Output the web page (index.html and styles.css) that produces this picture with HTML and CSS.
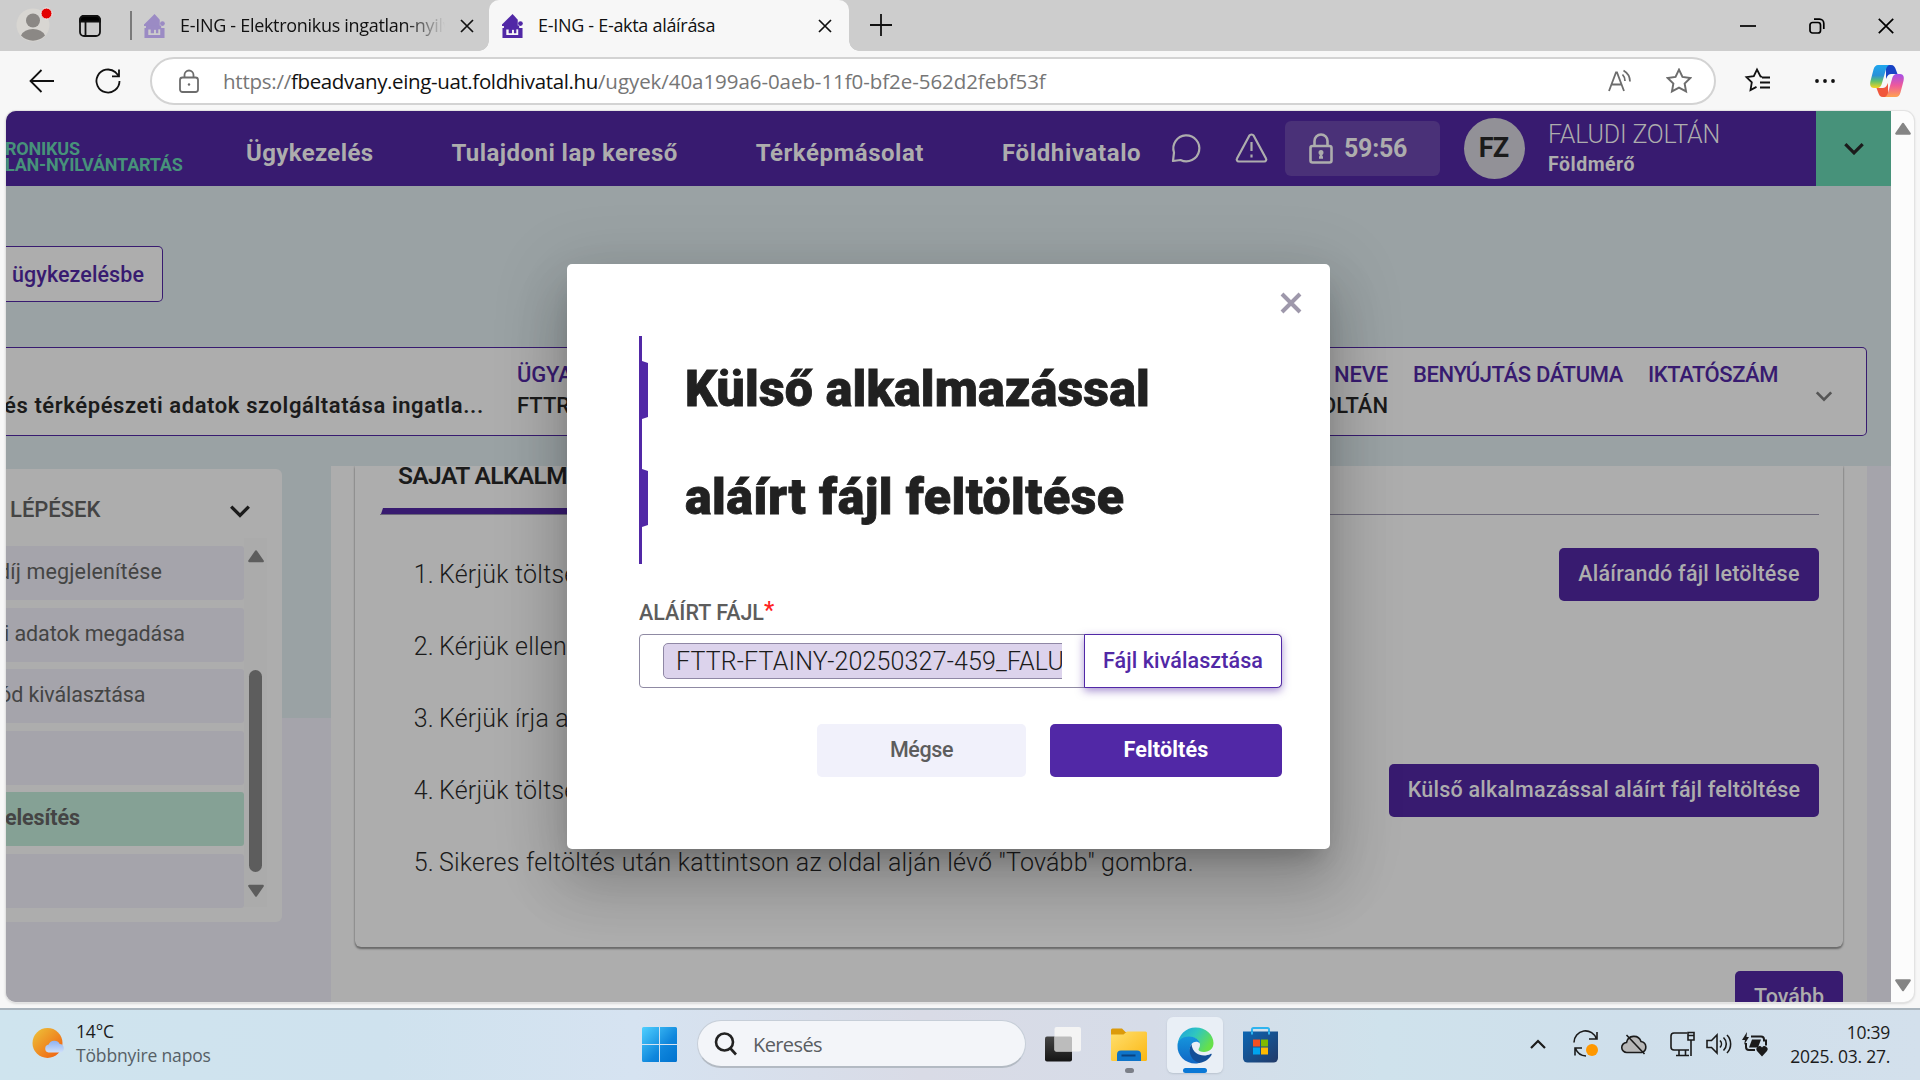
FILE: index.html
```html
<!DOCTYPE html>
<html lang="hu">
<head>
<meta charset="utf-8">
<title>E-ING - E-akta aláírása</title>
<link rel="stylesheet" href="styles.css">
</head>
<body>
<svg class="defs" width="0" height="0" aria-hidden="true">
  <symbol id="house" viewBox="0 0 22 25"><path d="M0 12.500V11L9 2l2-2 2 2 3.500 4v6.500z"/><circle cx="19.300" cy="10" r="2.500"/><path d="M2 12h16v4H2z"/><path fill-rule="evenodd" d="M.5 14.500H21.500V25H.5zM4.500 16v6h12.500V14.500h-2V20h-2.500v-3.500h-2V20H7v-4z"/></symbol>
  <symbol id="star" viewBox="0 0 24 24"><path d="M12 1.500l3.200 6.700 7.300 1-5.300 5.100 1.300 7.300L12 18.100l-6.500 3.500 1.300-7.300L1.500 9.200l7.300-1z"/></symbol>
  <symbol id="cross" viewBox="0 0 14 14"><path d="M1 1l12 12M13 1L1 13"/></symbol>
  <symbol id="chevron" viewBox="0 0 20 12"><path d="M2 2l8 8 8-8"/></symbol>
  <symbol id="tri" viewBox="0 0 16 12"><path d="M8 2l6 8.500H2z"/></symbol>
</svg>

<header class="tabstrip">
  <div class="profile">
    <svg width="36" height="36" viewBox="0 0 36 36"><circle cx="17" cy="19" r="16.500" fill="#d8d6d2"/><circle cx="17" cy="14.500" r="7" fill="#8b8885"/><path d="M5 29.500a12.500 9 0 0 1 24 0 16.500 16.500 0 0 1-24 0z" fill="#8b8885"/><circle cx="30.500" cy="7.500" r="5.500" fill="#e30000" stroke="#eee" stroke-width="1"/></svg>
  </div>
  <div class="workspaces">
    <svg width="22" height="22" viewBox="0 0 22 22" fill="none" stroke="#111" stroke-width="1.800"><rect x="1" y="1" width="20" height="20" rx="4"/><path d="M6.500 6v15"/><path d="M1 6.500V5a4 4 0 0 1 4-4h12a4 4 0 0 1 4 4v1.500z" fill="#000"/></svg>
  </div>
  <div class="tab">
    <svg class="fav pale" width="21" height="24"><use href="#house"/></svg>
    <span class="tab-title fade">E-ING - Elektronikus ingatlan-nyilvántartás</span>
    <svg class="x" width="14" height="14"><use href="#cross"/></svg>
  </div>
  <div class="tab active">
    <svg class="fav" width="21" height="24"><use href="#house"/></svg>
    <span class="tab-title">E-ING - E-akta aláírása</span>
    <svg class="x" width="14" height="14"><use href="#cross"/></svg>
  </div>
  <svg class="plus" width="22" height="22" viewBox="0 0 22 22"><path d="M11 0v22M0 11h22"/></svg>
  <div class="window-buttons">
    <svg width="16" height="16" viewBox="0 0 16 16"><path d="M0 8h16"/></svg>
    <svg width="16" height="16" viewBox="0 0 16 16"><rect x="1" y="4.500" width="10.500" height="10.500" rx="2.500"/><path d="M5 1.200h5.500a4.300 4.300 0 0 1 4.300 4.300V11"/></svg>
    <svg width="16" height="16" viewBox="0 0 16 16"><path d="M.8.800l14.400 14.400M15.200.800L.8 15.200"/></svg>
  </div>
</header>

<div class="toolbar">
  <svg class="back" width="26" height="24" viewBox="0 0 26 24"><path d="M1.500 12H25M12.500 1L1.500 12l11 11"/></svg>
  <svg class="reload" width="26" height="26" viewBox="0 0 26 26"><path d="M24.500 13a11.500 11.500 0 1 1-4-8.700L24 8M24 1.500V8.300h-7"/></svg>
  <div class="address">
    <svg class="padlock" width="20" height="24" viewBox="0 0 20 24"><rect x="1" y="8.500" width="18" height="14.500" rx="2.500"/><path d="M5.500 8.500V6a4.500 4.500 0 0 1 9 0v2.500"/><circle cx="10" cy="15.500" r="1.200" class="dot"/></svg>
    <span class="url"><span class="scheme">https://</span><span class="host">fbeadvany.eing-uat.foldhivatal.hu</span><span class="path">/ugyek/40a199a6-0aeb-11f0-bf2e-562d2febf53f</span></span>
    <svg class="aloud" width="24" height="24" viewBox="0 0 24 24"><path d="M1 22L8 3.500h1L16 22M3.500 15.500h10M14.500 5.500a9 9 0 0 1 2.500 6.500M15.500 1.500a13 13 0 0 1 6.500 11"/></svg>
    <svg class="star" width="26" height="26"><use href="#star"/></svg>
  </div>
  <svg class="favorites" width="26" height="26" viewBox="0 0 26 26"><path d="M17 8.800l-1.500-.3L12 1.500 8.800 8.200l-7.300 1 5.300 5.100-1.300 7.800 6-3.200M17 9.500h8M15 14.500h10M15 19.500h10"/></svg>
  <svg class="more" width="22" height="6" viewBox="0 0 22 6"><circle cx="3" cy="3" r="1.900"/><circle cx="11" cy="3" r="1.900"/><circle cx="19" cy="3" r="1.900"/></svg>
  <svg class="copilot" width="34" height="32" viewBox="0 0 34 32">
    <defs>
      <linearGradient id="cpa" x1="0" y1="0" x2="0" y2="1"><stop offset="0" stop-color="#1ea7ee"/><stop offset=".45" stop-color="#2a90d8"/><stop offset=".7" stop-color="#5fc06d"/><stop offset="1" stop-color="#f6d51f"/></linearGradient>
      <linearGradient id="cpb" x1="0" y1="0" x2="0" y2="1"><stop offset="0" stop-color="#a44ee8"/><stop offset=".5" stop-color="#ee5a9b"/><stop offset="1" stop-color="#ffa24f"/></linearGradient>
    </defs>
    <path d="M16 0h5c3 0 4 2 5 5l1.500 4H21c-3 0-4 3-5 5z" fill="#1843c5"/>
    <path d="M18 32h-5c-3 0-4-2-5-5l-1.500-4H13c3 0 4-3 5-5z" fill="#f0573c"/>
    <path d="M8 0h11c-2 1-2.700 3-3.500 6l-3.500 12c-1 3.500-2 5-5 5H4c-3.500 0-4.500-3-3.500-7L3.500 4.500C4.300 1.500 6 0 8 0z" fill="url(#cpa)"/>
    <path d="M26 32H15c2-1 2.700-3 3.500-6L22 14c1-3.500 2-5 5-5h3c3.500 0 4.500 3 3.500 7l-3 11.500c-.8 3-2.500 4.500-4.500 4.500z" fill="url(#cpb)"/>
  </svg>
</div>

<div class="viewport">
  <div class="page">
    <div class="site-header">
      <div class="brand"><span>RONIKUS</span><span>LAN-NYILVÁNTARTÁS</span></div>
      <nav class="nav"><a class="n1">Ügykezelés</a><a class="n2">Tulajdoni lap kereső</a><a class="n3">Térképmásolat</a><a class="n4">Földhivatalo</a></nav>
      <svg class="line-icon" width="30" height="30" viewBox="0 0 30 30"><path d="M3 19.500A13 13 0 1 1 9.500 27L2 28z"/></svg>
      <svg class="line-icon" width="33" height="30" viewBox="0 0 33 30"><path d="M14.300 2.700a2.600 2.600 0 0 1 4.400 0L31 25.500a2 2 0 0 1-1.700 3H3.700a2 2 0 0 1-1.700-3zM16.500 9v9M16.500 21.500v3"/></svg>
      <div class="timer"><svg width="24" height="31" viewBox="0 0 24 31"><rect x="1.500" y="13" width="21" height="16.500" rx="2"/><path d="M5.500 13V8a6.500 6.500 0 0 1 13 0v5M12 18.500v6M10 24.500h4"/><circle cx="12" cy="19.500" r="1.200"/></svg><span>59:56</span></div>
      <div class="avatar"><span>FZ</span></div>
      <div class="user"><span class="user-name">FALUDI ZOLTÁN</span><span class="role">Földmérő</span></div>
      <div class="expand"><svg width="22" height="13"><use href="#chevron"/></svg></div>
    </div>

    <div class="hero">
      <div class="back-link">ügykezelésbe</div>
      <div class="case">
        <div><span class="label">&nbsp;</span><span class="value long">és térképészeti adatok szolgáltatása ingatla...</span></div>
        <div><span class="label">ÜGYAZONOSÍTÓ</span><span class="value">FTTR-FTAINY</span></div>
        <div class="end"><span class="label">BENYÚJTÓ NEVE</span><span class="value">FALUDI ZOLTÁN</span></div>
        <div><span class="label l1">BENYÚJTÁS DÁTUMA</span></div>
        <div><span class="label l2">IKTATÓSZÁM</span></div>
        <svg width="18" height="12"><use href="#chevron"/></svg>
      </div>
    </div>

    <div class="workspace">
      <aside class="side">
        <div class="steps">
          <div class="steps-head"><span>LÉPÉSEK</span><svg width="22" height="14"><use href="#chevron"/></svg></div>
          <div class="steps-body">
            <ul class="step-list">
              <li><span class="cut-a">díj megjelenítése</span></li>
              <li><span class="cut-b">i adatok megadása</span></li>
              <li><span class="cut-c">ód kiválasztása</span></li>
              <li></li>
              <li class="current"><span class="cut-d">elesítés</span></li>
              <li></li>
            </ul>
            <div class="mini-scroll"><svg width="18" height="14"><use href="#tri"/></svg><i></i><svg class="down" width="18" height="14"><use href="#tri"/></svg></div>
          </div>
        </div>
      </aside>
      <main class="main">
        <section class="card">
          <div class="card-tabs"><div class="card-tab">SAJÁT ALKALMAZÁS</div></div>
          <ol class="guide">
            <li><b>1.</b><span>Kérjük töltse le a fájlt.</span><a class="btn t1">Aláírandó fájl letöltése</a></li>
            <li><b>2.</b><span>Kérjük ellenőrizze a fájlt.</span></li>
            <li><b>3.</b><span>Kérjük írja alá a fájlt.</span></li>
            <li><b>4.</b><span>Kérjük töltse fel a fájlt.</span><a class="btn t2">Külső alkalmazással aláírt fájl feltöltése</a></li>
            <li><b>5.</b><span>Sikeres feltöltés után kattintson az oldal alján lévő "Tovább" gombra.</span></li>
          </ol>
        </section>
        <div class="main-foot"><a class="btn next">Tovább</a></div>
      </main>
    </div>

    <div class="modal">
      <div class="close-row"><svg width="22" height="20" viewBox="0 0 22 20"><path d="M2 1l18 18M20 1L2 19"/></svg></div>
      <div class="modal-body">
        <div class="modal-title">
          <div class="title-line"><i></i><span class="tl1">Külső alkalmazással</span></div>
          <div class="title-line"><i></i><span class="tl2">aláírt fájl feltöltése</span></div>
        </div>
        <div class="field-label">ALÁÍRT FÁJL<em>*</em></div>
        <div class="file-input">
          <div class="chip-clip"><div class="chip">FTTR-FTAINY-20250327-459_FALUDI</div></div>
          <a class="pick">Fájl kiválasztása</a>
        </div>
        <div class="actions"><a class="cancel">Mégse</a><a class="submit">Feltöltés</a></div>
      </div>
    </div>
  </div>
  <div class="scrollbar"><svg width="18" height="15"><use href="#tri"/></svg><svg class="down" width="18" height="15"><use href="#tri"/></svg></div>
</div>

<footer class="taskbar">
  <div class="weather">
    <svg width="34" height="34" viewBox="0 0 34 34"><defs><linearGradient id="sun" x1="0" y1="0" x2="1" y2="1"><stop offset="0" stop-color="#edc53a"/><stop offset="1" stop-color="#f0590d"/></linearGradient><linearGradient id="cl" x1="0" y1="0" x2="0" y2="1"><stop offset="0" stop-color="#8fb2f2"/><stop offset="1" stop-color="#cfe0fa"/></linearGradient></defs><circle cx="15.500" cy="16" r="15" fill="url(#sun)"/><path d="M16.500 25.500a4 4 0 0 1 .2-7.900 6 6 0 0 1 11-.6 4.400 4.400 0 0 1 1.300 8.500z" fill="url(#cl)"/></svg>
    <div><span class="temp">14°C</span><span class="sky">Többnyire napos</span></div>
  </div>
  <div class="apps">
    <svg class="start" width="35" height="35" viewBox="0 0 35 35"><defs><linearGradient id="win" x1="0" y1="0" x2="1" y2="1"><stop offset="0" stop-color="#4fd0ff"/><stop offset=".6" stop-color="#0f86dc"/><stop offset="1" stop-color="#0072cf"/></linearGradient></defs><path d="M1.500 0H17v17H0V1.500A1.500 1.500 0 0 1 1.500 0zM18 0h15.500A1.500 1.500 0 0 1 35 1.500V17H18zM0 18h17v17H1.500A1.500 1.500 0 0 1 0 33.500zM18 18h17v15.500a1.500 1.500 0 0 1-1.500 1.500H18z" fill="url(#win)"/></svg>
    <div class="search"><svg width="24" height="24" viewBox="0 0 24 24"><circle cx="10.500" cy="10" r="8.500"/><path d="M16.500 16.500l5.500 6"/></svg><span>Keresés</span></div>
    <svg class="taskview" width="36" height="35" viewBox="0 0 36 35"><defs><linearGradient id="dk" x1="0" y1="0" x2="0" y2="1"><stop offset="0" stop-color="#454545"/><stop offset="1" stop-color="#151515"/></linearGradient></defs><rect y="9.500" width="27" height="25" rx="2" fill="url(#dk)"/><rect x="9.500" y="0" width="26.500" height="24.500" rx="2" fill="#f4f4f4"/><path d="M9.500 9.500h16a1.500 1.500 0 0 1 1.500 1.500v13.500H11a1.500 1.500 0 0 1-1.500-1.500z" fill="#bcbcbc"/></svg>
    <div class="app folder"><svg width="36" height="34" viewBox="0 0 36 34"><defs><linearGradient id="fo" x1="0" y1="0" x2="1" y2="1"><stop offset="0" stop-color="#ffdf6e"/><stop offset="1" stop-color="#fbb713"/></linearGradient></defs><path d="M0 2a1.500 1.500 0 0 1 1.500-1.500H11l3.500 3.500H20v5H0z" fill="#dc9a0b"/><path d="M0 6.500h12.500L16 3.500h18.500A1.500 1.500 0 0 1 36 5v26.500a1.500 1.500 0 0 1-1.500 1.500h-33A1.500 1.500 0 0 1 0 31.500z" fill="url(#fo)"/><path d="M6 33v-6.500a4 4 0 0 1 4-4h16a4 4 0 0 1 4 4V33z" fill="#0f74c9"/><path d="M10.500 27.500h14" stroke="#0a4280" stroke-width="2"/></svg><i></i></div>
    <div class="app edge"><svg width="37" height="37" viewBox="0 0 37 37"><defs><linearGradient id="eg" x1="0" y1="0" x2="1" y2=".5"><stop offset="0" stop-color="#1c9de0"/><stop offset=".5" stop-color="#2fc6c0"/><stop offset="1" stop-color="#66e04a"/></linearGradient><linearGradient id="eb" x1="0" y1="0" x2="0" y2="1"><stop offset="0" stop-color="#1695dc"/><stop offset="1" stop-color="#0f66c4"/></linearGradient></defs><path d="M.5 18.500C1 8 9 .5 18.500.5 29 .5 36.500 8 36.500 16c0 5.500-4 9-9.500 9-3.500 0-5.500-1.200-5.500-2.500 0-1.200 1.500-2 1.500-5 0-4-5-7.500-11-7.500C7 10 2 13 .5 18.500z" fill="url(#eg)"/><path d="M.5 18.500C1 12.500 6 9.500 12 9.500c6 0 10.500 3.500 11 7-2-2.300-6-2.500-8.500.5-4 5-.5 14 7 17 3 1.200 1 2.500-3 2.500C8 36.500 0 28.500.5 18.500z" fill="url(#eb)"/><path d="M14.500 17c-3.500 4.500-2.500 16 8 19 6-1 10-4.500 12-8 .5-.9-.2-1.400-1-1-7 3.500-18 1-19-10z" fill="#134f98"/></svg><i></i></div>
    <svg class="store" width="35" height="36" viewBox="0 0 35 36"><defs><linearGradient id="st" x1="0" y1="0" x2="1" y2="1"><stop offset="0" stop-color="#0c66b3"/><stop offset="1" stop-color="#223a68"/></linearGradient></defs><path d="M9 7V2.500A1.500 1.500 0 0 1 10.500 1h14A1.500 1.500 0 0 1 26 2.500V7" fill="none" stroke="#2fb4ef" stroke-width="2"/><path d="M0 4.500h35V31a4.500 4.500 0 0 1-4.500 4.500h-26A4.500 4.500 0 0 1 0 31z" fill="url(#st)"/><path d="M9 4.500v3M26 4.500v3" stroke="#2fb4ef" stroke-width="2"/><path d="M10 12.500h7v7h-7z" fill="#f25022"/><path d="M18 12.500h7v7h-7z" fill="#7fba00"/><path d="M10 20.500h7v7h-7z" fill="#00a4ef"/><path d="M18 20.500h7v7h-7z" fill="#ffb900"/></svg>
  </div>
  <div class="tray">
    <svg class="up" width="16" height="9" viewBox="0 0 16 9"><path d="M1 8l7-7 7 7"/></svg>
    <svg class="sync" width="26" height="26" viewBox="0 0 26 26"><path d="M1 11.500A11.500 11.500 0 0 1 23.500 8M24 1v7h-8M9 17H2v7.500M2.500 17.500A12 12 0 0 0 13 25"/><circle cx="19" cy="19" r="6" class="orange"/></svg>
    <svg class="cloud" width="26" height="22" viewBox="0 0 26 22"><path d="M6 19.500a5 5 0 0 1-.5-10 7.500 7.500 0 0 1 14.500-1 5.600 5.600 0 0 1 .5 11z" fill="#b8b8b8"/><path d="M5.500 2l18 19"/></svg>
    <svg class="monitor" width="25" height="26" viewBox="0 0 25 26"><path d="M17 2H4a3 3 0 0 0-3 3v11a3 3 0 0 0 3 3h15M9 19v5M15.500 19v5M6 24.500h13M18 1.500h6V9h-6zM21 9v16M18 4.500h6"/></svg>
    <svg class="sound" width="25" height="24" viewBox="0 0 25 24"><path d="M1 8.500h4.500L11 3v18l-5.500-5.500H1zM14 8.500a5 5 0 0 1 0 7M17.500 5.500a9 9 0 0 1 0 13M21 3a13 13 0 0 1 0 18"/></svg>
    <svg class="battery" width="26" height="26" viewBox="0 0 26 26"><path d="M9 5.500h10a3 3 0 0 1 3 3v1h2v5M4 12v4a3 3 0 0 0 3 3h6"/><path d="M10 8.500h9l-3 8H7z" class="fill"/><path d="M5 1L0 9h3l-1 5 5-8H4.500z" class="fill"/><path d="M20 25.500l-5-5.500a3 3 0 0 1 5-3.500 3 3 0 0 1 5 3.500z" class="fill"/></svg>
    <div class="clock"><span>10:39</span><span>2025. 03. 27.</span></div>
  </div>
</footer>
</body>
</html>
```
FILE: styles.css
```css
* { box-sizing: border-box; }
body {
  margin: 0; width: 1920px; height: 1080px; overflow: hidden;
  display: flex; flex-direction: column; background: #f7f7f7;
  font-family: Roboto, "Liberation Sans", sans-serif; color: #1b1b1b;
}
svg { display: block; flex: none; overflow: visible; }
.defs { position: absolute; }
ul, ol { list-style: none; margin: 0; padding: 0; }

/* tab strip */
.tabstrip { height: 51px; background: #cdcdcd; display: flex; align-items: center; font: 18px "Open Sans", sans-serif; color: #111; flex: none; }
.profile { width: 79px; padding: 0 0 3px 16px; }
.workspaces { width: 53px; height: 29px; display: flex; align-items: center; border-right: 2px solid #7a7a7a; }
.tab { display: flex; align-items: center; width: 357px; height: 51px; padding-left: 12px; }
.tab.active { width: 360px; background: #f7f7f7; border-radius: 10px 10px 0 0; padding-left: 13px; position: relative; }
.tab.active::before, .tab.active::after { content: ""; position: absolute; bottom: 0; width: 10px; height: 10px; }
.tab.active::before { left: -10px; background: radial-gradient(circle at 0 0, transparent 9.500px, #f7f7f7 10px); }
.tab.active::after { right: -10px; background: radial-gradient(circle at 100% 0, transparent 9.500px, #f7f7f7 10px); }
.fav { fill: #5128a6; }
.fav.pale { fill: #9b8bc4; }
.tab-title { width: 267px; margin: 0 12px 1px 15px; letter-spacing: -.3px; white-space: nowrap; overflow: hidden; }
.fade { width: 268px; }
.tab.active .tab-title { width: 268px; }
.fade { -webkit-mask-image: linear-gradient(90deg, #000 225px, transparent 265px); mask-image: linear-gradient(90deg, #000 225px, transparent 265px); }
.x { stroke: #111; stroke-width: 1.700; }
.plus { margin: 0 0 2px 21px; stroke: #111; stroke-width: 1.800; }
.window-buttons { margin-left: auto; padding-right: 26px; display: flex; gap: 53px; fill: none; stroke: #000; stroke-width: 1.700; }

/* toolbar */
.toolbar { height: 60px; display: flex; align-items: center; flex: none; fill: none; stroke: #111; stroke-width: 1.800; }
.back { margin-left: 29px; }
.reload { margin-left: 40px; }
.address { margin-left: 29px; width: 1566px; height: 48px; border: 2px solid #d3d3d3; border-radius: 24px; background: #fff; display: flex; align-items: center; padding: 0 22px 0 27px; stroke: #6d6d6d; }
.padlock .dot { fill: #6d6d6d; stroke: none; }
.url { margin-left: 24px; font: 20.500px "Open Sans", sans-serif; color: #767676; white-space: nowrap; }
.scheme { letter-spacing: -.24px; }
.host { color: #111; letter-spacing: -.37px; }
.path { letter-spacing: -.06px; }
.aloud { margin-left: auto; margin-right: 34px; }
.favorites { margin-left: 29px; }
.more { margin-left: 43px; fill: #111; stroke: none; }
.copilot { margin-left: 34px; stroke: none; }

/* viewport */
.viewport { margin-left: 6px; width: 1908px; height: 891px; display: flex; flex: none; border-radius: 10px; background: #fcfcfc; box-shadow: 0 0 0 1px #e3e3e3, 0 1px 3px #bbb; overflow: hidden; }
.page { width: 1885px; height: 891px; position: relative; overflow: hidden; background: #a5a4ab; }
.scrollbar { flex: 1; display: flex; flex-direction: column; justify-content: space-between; align-items: center; padding: 10px 0 9px; fill: #858585; stroke: #858585; stroke-width: 2; stroke-linejoin: round; }
.down { transform: rotate(180deg); }

.site-header { height: 75px; background: #381b70; color: #adadad; display: grid; grid-template-columns: 241px 925px 64px 49px 179px 84px 268px 75px; align-items: center; }
.brand { display: flex; flex-direction: column; font-size: 18px; line-height: 16px; font-weight: 700; color: #47927a; padding-top: 17px; letter-spacing: -.2px; white-space: nowrap; }
.brand span { margin-left: -1px; }
.nav { display: flex; gap: 78px; padding-top: 9px; margin-left: -1px; font-size: 24px; font-weight: 700; white-space: nowrap; }
.n1 { letter-spacing: .36px; } .n2 { letter-spacing: .45px; } .n3 { letter-spacing: .53px; } .n4 { letter-spacing: .62px; }
.line-icon { fill: none; stroke: #adadad; stroke-width: 2.200; stroke-linejoin: round; margin: 0 0 2px -1px; }
.timer { width: 155px; height: 55px; background: #4a3178; border-radius: 6px; display: flex; align-items: center; gap: 11px; padding-left: 24px; font-size: 25px; font-weight: 700; letter-spacing: -.28px; }
.timer span { padding-bottom: 1px; }
.timer svg { fill: none; stroke: #adadad; stroke-width: 2.600; }
.avatar { width: 61px; height: 61px; border-radius: 50%; background: #929197; color: #1b1b1b; display: flex; align-items: center; justify-content: center; font-size: 27px; font-weight: 700; letter-spacing: -.8px; padding: 0 2px 2px 0; }
.user { display: flex; flex-direction: column; align-self: start; padding-top: 9px; }
.user-name { font-size: 25px; font-weight: 300; line-height: 30px; letter-spacing: -.19px; }
.role { font-size: 19.500px; font-weight: 700; line-height: 30px; letter-spacing: .5px; }
.expand { height: 75px; background: #47927a; display: flex; align-items: center; justify-content: center; fill: none; stroke: #1b1b1b; stroke-width: 3; }

.hero { height: 280px; background: #9aa2a4; padding-top: 60px; }
.back-link { width: 157px; height: 56px; border: 1px solid #381b70; border-left: 0; border-radius: 0 5px 5px 0; background: #adadad; color: #381b70; text-align: right; padding-right: 18px; font-size: 21.500px; font-weight: 500; line-height: 56px; letter-spacing: .08px; }
.case { margin-top: 45px; width: 1861px; height: 89px; border: 1px solid #381b70; border-left: 0; border-radius: 0 5px 5px 0; background: #adadad; display: grid; grid-template-columns: 511px 623px 273px 235px 168px 1fr; padding-top: 12px; white-space: nowrap; }
.case .end { text-align: right; padding-right: 25px; }
.case span { display: block; font-size: 22px; font-weight: 500; line-height: 30px; }
.case .value { padding-top: 1px; }
.case .label { color: #381b70; letter-spacing: -.17px; }
.case .l1 { letter-spacing: -.35px; }
.case .l2 { letter-spacing: -.46px; }
.case .value.long { letter-spacing: .59px; font-weight: 600; margin-left: -2px; }
.case svg { margin: 30px 0 0 -1px; fill: none; stroke: #555; stroke-width: 3; }

.workspace { height: 536px; display: flex; }
.side { width: 325px; padding-top: 3px; background: linear-gradient(#9aa2a4 252px, #a5a4ab 252px); }
.steps { width: 276px; height: 453px; background: #adadad; border-radius: 0 6px 6px 0; }
.steps-head { height: 77px; display: flex; justify-content: space-between; align-items: center; padding: 3px 31px 0 4px; font-size: 22px; font-weight: 500; color: #444; fill: none; stroke: #1b1b1b; stroke-width: 3; }
.steps-head span { stroke: none; }
.steps-head svg { margin-top: 4px; }
.steps-body { display: flex; }
.step-list { width: 238px; display: flex; flex-direction: column; gap: 7.500px; }
.step-list li { height: 54px; background: #a5a4ab; border-radius: 0 3px 3px 0; overflow: hidden; font-size: 21.500px; line-height: 51px; color: #444; white-space: nowrap; }
.step-list span { display: block; }
.cut-a { margin-left: -8px; letter-spacing: .15px; }
.cut-b { margin-left: -2px; letter-spacing: -.07px; }
.cut-c { margin-left: -7px; letter-spacing: -.11px; }
.cut-d { margin-left: -1px; font-weight: 700; letter-spacing: -.1px; }
.step-list .current { background: #85a195; }
.mini-scroll { width: 23px; height: 369px; margin-top: -8px; background: #ababab; display: flex; flex-direction: column; align-items: center; padding: 11px 0 0; fill: #5d5d5d; stroke: #5d5d5d; stroke-width: 2; stroke-linejoin: round; }
.mini-scroll i { width: 13px; height: 202px; border-radius: 7px; background: #5d5d5d; margin: 107px 0 12px; flex: none; }

.main { width: 1536px; height: 536px; overflow: hidden; background: #adadad; padding-left: 24px; }
.card { width: 1488px; height: 481px; border-radius: 0 0 6px 6px; box-shadow: 0 0 2px #777, 0 2px 2px #666; clip-path: inset(0 -4px -6px -4px); }
.card-tabs { margin: 0 24px 0 25px; height: 49px; border-bottom: 1px solid #6b6779; display: flex; }
.card-tab { margin-left: 1px; height: 48px; width: 330px; border-bottom: 6px solid #381b70; border-left: 2px solid transparent; border-right: 2px solid transparent; padding-left: 15px; font-size: 24.500px; font-weight: 600; line-height: 19px; letter-spacing: -.6px; white-space: nowrap; }
.guide { padding: 23px 24px 0 25px; }
.guide li { height: 72px; display: flex; align-items: center; font-size: 25px; font-weight: 350; letter-spacing: .21px; white-space: nowrap; }
.guide span { padding-top: 1px; }
.guide b { width: 54px; text-align: right; font-weight: inherit; margin-right: 5px; padding-top: 1px; }
.guide .btn, .btn { margin-left: auto; height: 53px; border-radius: 5px; background: #381b70; color: #adadad; font-size: 21.500px; font-weight: 500; line-height: 51px; text-align: center; letter-spacing: .24px; }
.t1 { width: 260px; }
.t2 { width: 430px; }
.main-foot { margin-top: 24px; width: 1488px; display: flex; }
.next { width: 108px; letter-spacing: 0; }

/* modal */
.modal { position: absolute; left: 561px; top: 153px; width: 763px; height: 585px; background: #fff; border-radius: 5px; box-shadow: 0 16px 22px -10px rgba(0,0,0,.2), 0 36px 57px 4px rgba(0,0,0,.14), 0 14px 69px 12px rgba(0,0,0,.12); }
.close-row { height: 72px; padding: 29px 28px 0 0; display: flex; justify-content: flex-end; stroke: #9e98ab; stroke-width: 4; }
.modal-body { padding: 0 48px 0 72px; }
.modal-title { height: 228px; border-left: 3px solid #5128a6; }
.title-line { height: 108px; display: flex; align-items: center; gap: 37px; font-size: 50px; font-weight: 900; color: #212121; white-space: nowrap; }
.title-line span { padding-bottom: 2px; -webkit-text-stroke: .8px #212121; }
.title-line i { width: 6px; height: 58px; background: #5128a6; clip-path: polygon(0 0, 100% 2px, 100% 56px, 0 100%); }
.tl1 { letter-spacing: .2px; }
.tl2 { letter-spacing: .45px; }
.field-label { margin-top: 34px; height: 36px; font-size: 21.500px; font-weight: 500; line-height: 30px; color: #5d5d5d; }
.field-label em { color: #f22; font-style: normal; font-size: 23px; line-height: 1; vertical-align: 2px; }
.file-input { display: flex; height: 54px; width: 643px; border: 1px solid #8f8aa3; border-radius: 4px; align-items: center; padding-left: 23px; }
.chip-clip { width: 399px; overflow: hidden; margin-right: 22px; }
.chip { width: 600px; height: 36px; border: 1px solid #8f87a5; border-radius: 5px; background: #dcd3ec; padding-left: 12px; font-size: 25px; font-weight: 350; line-height: 35px; white-space: nowrap; letter-spacing: .14px; }
.pick { width: 198px; height: 54px; margin-right: -1px; flex: none; border: 1px solid #5128a6; border-radius: 0 5px 5px 0; background: #fff; color: #5128a6; font-size: 21.500px; font-weight: 500; line-height: 52px; text-align: center; letter-spacing: .09px; box-shadow: 0 3px 8px rgba(81,40,166,.5); }
.actions { margin-top: 36px; display: flex; justify-content: flex-end; gap: 24px; text-align: center; font-size: 21.500px; line-height: 51px; font-weight: 500; }
.cancel { width: 209px; height: 53px; border-radius: 5px; background: #f1f1fb; color: #5d5d5d; letter-spacing: -.4px; }
.submit { width: 232px; height: 53px; border-radius: 5px; background: #5128a6; color: #fff; font-weight: 700; letter-spacing: .15px; }

/* taskbar */
.taskbar { margin-top: 6px; height: 72px; flex: none; border-top: 2px solid #a9b4bd; background: linear-gradient(90deg, #cfe4ee 0, #cfe2ee 20%, #d6e3f1 33%, #d9dbe6 48%, #d6dce8 60%, #cfe2ec 72%, #cfdfeb 85%, #d3e0ec 100%); display: grid; grid-template-columns: 642px 1fr 390px; font-family: "Open Sans", sans-serif; }
.weather { display: flex; padding: 17px 0 0 32px; gap: 10px; font-size: 17.500px; line-height: 24px; letter-spacing: -.15px; }
.weather div { margin-top: -8px; }
.weather span { display: block; }
.sky { color: #565f66; }
.apps { display: flex; align-items: center; height: 68px; }
.search { margin: 0 19px 0 20px; width: 329px; height: 48px; border-radius: 24px; background: #f3f5f9; border: 1px solid #c6ced8; border-bottom: 2px solid #b3bac3; display: flex; align-items: center; gap: 15px; padding-left: 16px; font-size: 20px; letter-spacing: -.6px; color: #5a5d61; }
.search span { padding-top: 1px; }
.search svg { fill: none; stroke: #222; stroke-width: 2.600; }
.app { height: 56px; width: 56px; border-radius: 6px; display: flex; flex-direction: column; align-items: center; justify-content: space-between; padding-top: 10px; }
.app i { height: 5px; border-radius: 3px; }
.folder { margin: 1px 10px 0 20px; padding-top: 11px; }
.folder i { width: 9px; background: #7b7f88; }
.edge { margin-top: 1px; background: #e9eff6; box-shadow: 0 1px 2px #b9c3ce; }
.edge i { width: 24px; background: #0a78d6; }
.store { margin: 1px 0 0 20px; }
.tray { display: flex; height: 68px; align-items: center; fill: none; stroke: #1b1b1b; stroke-width: 1.600; }
.up { stroke-width: 2.200; }
.sync { margin-left: 27px; }
.orange { fill: #ff9800; stroke: none; }
.cloud { margin-left: 22px; }
.monitor { margin-left: 23px; }
.sound { margin-left: 11px; }
.battery { margin-left: 11px; stroke-width: 2; }
.fill { fill: #1b1b1b; stroke: none; }
.clock { margin-left: auto; margin-right: 30px; text-align: right; font-size: 17.500px; line-height: 24px; letter-spacing: -.25px; stroke: none; color: #1b1b1b; }
.clock span { display: block; }
```
